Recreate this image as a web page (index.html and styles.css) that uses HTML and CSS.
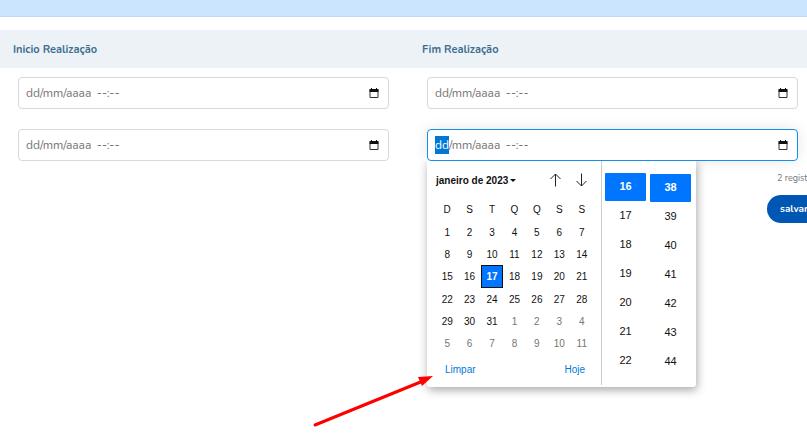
FILE: index.html
```html
<!DOCTYPE html>
<html lang="pt-BR">
<head>
    <meta charset="UTF-8">
    <meta name="viewport" content="width=device-width, initial-scale=1.0">
    <title>Realização</title>
    <link rel="stylesheet" href="styles.css">
</head>
<body>
    <div class="alert"></div>
    <table class="grid">
        <thead>
            <tr>
                <th>Inicio Realização</th>
                <th>Fim Realização</th>
            </tr>
        </thead>
        <tbody>
            <tr>
                <td>
                    <div class="field">
                        <input type="text" aria-label="Inicio Realização 1" value="dd/mm/aaaa&thinsp; --:--">
                        <button class="picker" aria-label="Abrir calendário"><svg width="10" height="11" viewBox="0 0 10 11"><path d="M1 2.5h8v7H1z" fill="none" stroke="#333"/><path d="M.5 1h9v3h-9zM2 0h1v2H2zM7 0h1v2H7z" fill="#111"/></svg></button>
                    </div>
                </td>
                <td>
                    <div class="field">
                        <input type="text" aria-label="Fim Realização 1" value="dd/mm/aaaa&thinsp; --:--">
                        <button class="picker" aria-label="Abrir calendário"><svg width="10" height="11" viewBox="0 0 10 11"><path d="M1 2.5h8v7H1z" fill="none" stroke="#333"/><path d="M.5 1h9v3h-9zM2 0h1v2H2zM7 0h1v2H7z" fill="#111"/></svg></button>
                    </div>
                </td>
            </tr>
            <tr>
                <td>
                    <div class="field">
                        <input type="text" aria-label="Inicio Realização 2" value="dd/mm/aaaa&thinsp; --:--">
                        <button class="picker" aria-label="Abrir calendário"><svg width="10" height="11" viewBox="0 0 10 11"><path d="M1 2.5h8v7H1z" fill="none" stroke="#333"/><path d="M.5 1h9v3h-9zM2 0h1v2H2zM7 0h1v2H7z" fill="#111"/></svg></button>
                    </div>
                </td>
                <td>
                    <div class="field active">
                        <input type="text" id="fim" aria-label="Fim Realização 2" value="dd/mm/aaaa&thinsp; --:--">
                        <button class="picker" aria-label="Abrir calendário"><svg width="10" height="11" viewBox="0 0 10 11"><path d="M1 2.5h8v7H1z" fill="none" stroke="#333"/><path d="M.5 1h9v3h-9zM2 0h1v2H2zM7 0h1v2H7z" fill="#111"/></svg></button>
                        <div class="popup">
                            <div class="calendar">
                                <div class="calendar-top">
                                    <button class="month">janeiro de 2023 <span class="caret"></span></button>
                                    <button class="nav" aria-label="Mês anterior"><svg width="13" height="14" viewBox="0 0 13 14"><path d="M6.5 13.5V1M1.5 6l5-5 5 5" fill="none" stroke="#222"/></svg></button>
                                    <button class="nav" aria-label="Próximo mês"><svg width="13" height="14" viewBox="0 0 13 14"><path d="M6.5 .5V13M1.5 8l5 5 5-5" fill="none" stroke="#222"/></svg></button>
                                </div>
                                <table class="days">
                                    <thead>
                                        <tr><th>D</th><th>S</th><th>T</th><th>Q</th><th>Q</th><th>S</th><th>S</th></tr>
                                    </thead>
                                    <tbody>
                                        <tr><td>1</td><td>2</td><td>3</td><td>4</td><td>5</td><td>6</td><td>7</td></tr>
                                        <tr><td>8</td><td>9</td><td>10</td><td>11</td><td>12</td><td>13</td><td>14</td></tr>
                                        <tr><td>15</td><td>16</td><td class="today">17</td><td>18</td><td>19</td><td>20</td><td>21</td></tr>
                                        <tr><td>22</td><td>23</td><td>24</td><td>25</td><td>26</td><td>27</td><td>28</td></tr>
                                        <tr><td>29</td><td>30</td><td>31</td><td class="other">1</td><td class="other">2</td><td class="other">3</td><td class="other">4</td></tr>
                                        <tr><td class="other">5</td><td class="other">6</td><td class="other">7</td><td class="other">8</td><td class="other">9</td><td class="other">10</td><td class="other">11</td></tr>
                                    </tbody>
                                </table>
                                <div class="calendar-bottom">
                                    <button>Limpar</button>
                                    <button>Hoje</button>
                                </div>
                            </div>
                            <div class="time">
                                <ul class="hours">
                                    <li class="selected">16</li>
                                    <li>17</li>
                                    <li>18</li>
                                    <li>19</li>
                                    <li>20</li>
                                    <li>21</li>
                                    <li>22</li>
                                </ul>
                                <ul class="minutes">
                                    <li class="selected">38</li>
                                    <li>39</li>
                                    <li>40</li>
                                    <li>41</li>
                                    <li>42</li>
                                    <li>43</li>
                                    <li>44</li>
                                </ul>
                            </div>
                            <svg class="arrow" width="122" height="52" viewBox="0 0 122 52"><path d="M2 50L110 6" stroke="#f00" stroke-width="3" stroke-linecap="round"/><path d="M120 1L105 2l4 9z" fill="#f00"/></svg>
                        </div>
                    </div>
                </td>
            </tr>
        </tbody>
    </table>
    <div class="footer">
        <span class="total">2 registros</span>
        <button class="save">salvar</button>
    </div>

    <script>
        const fim = document.getElementById('fim');
        fim.focus();
        fim.setSelectionRange(0, 2);
    </script>
</body>
</html>
```
FILE: styles.css
```css
* {
    box-sizing: border-box;
}
body {
    margin: 0;
    min-height: 100vh;
    background-color: #fff;
    font-family: Nunito, Lato, sans-serif;
    font-size: 11px;
    overflow: hidden;
}
button {
    border: none;
    background: none;
    padding: 0;
    font-family: inherit;
    cursor: pointer;
}
svg {
    display: block;
}
.alert {
    height: 17px;
    background-color: #cce5ff;
    border-bottom: 1px solid #b8daff;
    margin-bottom: 13px;
}
.grid {
    width: calc(100% + 11px);
    table-layout: fixed;
    border-collapse: collapse;
}
.grid > thead th {
    height: 38px;
    padding: 0 13px;
    background-color: #edf2f7;
    color: #3d708f;
    font-size: 11px;
    text-align: left;
}
.grid > tbody > tr > td {
    padding: 9px 20px 11px 18px;
}
.field {
    position: relative;
    display: flex;
    align-items: center;
    height: 32px;
    padding: 0 9px 0 7px;
    border: 1px solid #d9d9d9;
    border-radius: 4px;
    background-color: #fff;
}
.field.active {
    border-color: #1590e9;
    box-shadow: 0 0 14px rgba(0, 0, 0, 0.1);
}
.field input {
    flex: 1;
    min-width: 0;
    height: 18px;
    padding: 0;
    border: none;
    outline: none;
    background: none;
    color: #757575;
    font-family: inherit;
    font-size: 12px;
    line-height: 18px;
}
.field input::selection {
    background-color: #0078d7;
    color: #fff;
}
.popup {
    position: absolute;
    top: calc(100% + 1px);
    left: -1px;
    display: flex;
    width: 269px;
    height: 226px;
    padding-bottom: 2px;
    background-color: #fff;
    border-radius: 0 0 3px 3px;
    box-shadow: 1px 3px 10px rgba(0, 0, 0, 0.35);
    clip-path: inset(0 -20px -40px -120px);
    font-family: "Liberation Sans", Arial, sans-serif;
    font-size: 10px;
    color: #111;
}
.calendar {
    width: 175px;
    padding: 6px 8px 0 9px;
    border-right: 1px solid #ccc;
}
.calendar-top {
    display: flex;
    align-items: center;
    gap: 13px;
    height: 26px;
    padding-right: 5px;
}
.month {
    display: flex;
    align-items: center;
    gap: 2px;
    margin-right: auto;
    color: #111;
    font-size: 10px;
    font-weight: bold;
    white-space: nowrap;
}
.caret {
    border: 3px solid transparent;
    border-top: 3px solid #111;
    border-bottom: none;
}
.days {
    width: 157px;
    margin-top: 4px;
    table-layout: fixed;
    border-collapse: separate;
    border-spacing: 0;
    text-align: center;
}
.days th {
    height: 24px;
    padding: 0;
    font-weight: normal;
}
.days td {
    height: 22px;
    padding: 0;
}
.days tr:nth-child(3n) td {
    height: 23px;
}
.days .today {
    background-color: #0075ff;
    border: 1px solid #111;
    color: #fff;
    font-weight: bold;
}
.days .other {
    color: #757575;
}
.calendar-bottom {
    display: flex;
    justify-content: space-between;
    padding: 9px 8px 0 9px;
}
.calendar-bottom button {
    color: #0078d7;
    font-size: 10px;
}
.time {
    display: flex;
    gap: 4px;
    padding: 12px 3px 0;
    font-size: 11px;
}
.time ul {
    width: 41px;
    margin: 0;
    padding: 0;
    list-style: none;
    text-align: center;
}
.time li {
    height: 28px;
    margin-bottom: 1px;
    line-height: 26px;
    border-radius: 1px;
}
.time .minutes {
    padding-top: 1px;
}
.time .selected {
    background-color: #0075ff;
    color: #fff;
    font-weight: bold;
}
.arrow {
    position: absolute;
    left: -114px;
    top: 214px;
}
.footer {
    width: 40px;
    margin-left: auto;
    white-space: nowrap;
}
.total {
    display: block;
    margin-left: 10px;
    color: #757575;
    font-size: 9px;
    line-height: 13px;
}
.save {
    height: 28px;
    margin-top: 10px;
    padding: 0 13px;
    border-radius: 14px;
    background-color: #0056b3;
    color: #fff;
    font-size: 10px;
    font-weight: bold;
}
```
